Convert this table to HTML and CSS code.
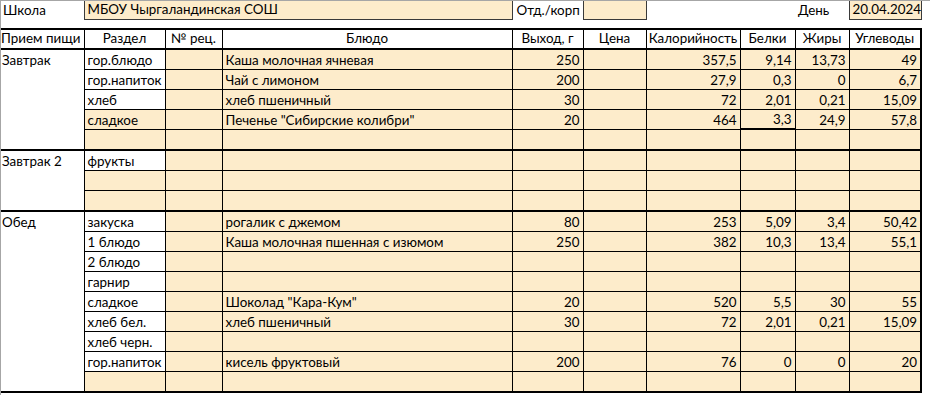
FILE: index.html
```html
<!DOCTYPE html>
<html lang="ru">
<head>
<meta charset="utf-8">
<title>Меню</title>
<link rel="stylesheet" href="styles.css">
</head>
<body>
<div class="sheet">
  <table class="info">
    <colgroup>
      <col class="ca"><col class="cb"><col class="cc"><col class="cd"><col class="ce"><col class="cf"><col class="cg"><col class="ch"><col class="ci"><col class="cj">
    </colgroup>
    <tr>
      <td>Школа</td>
      <td colspan="3" class="fld">МБОУ Чыргаландинская СОШ</td>
      <td class="side">Отд./корп</td>
      <td class="fld"></td>
      <td></td>
      <td></td>
      <td>День</td>
      <td class="fld num">20.04.2024</td>
    </tr>
  </table>

  <table class="menu">
    <colgroup>
      <col class="ca"><col class="cb"><col class="cc"><col class="cd"><col class="ce"><col class="cf"><col class="cg"><col class="ch"><col class="ci"><col class="cj">
    </colgroup>
    <thead>
      <tr class="head">
        <th class="first">Прием пищи</th>
        <th>Раздел</th>
        <th>№ рец.</th>
        <th>Блюдо</th>
        <th>Выход, г</th>
        <th>Цена</th>
        <th>Калорийность</th>
        <th>Белки</th>
        <th>Жиры</th>
        <th>Углеводы</th>
      </tr>
    </thead>
    <tbody>
      <tr>
        <td class="meal">Завтрак</td><td class="sec">гор.блюдо</td><td></td><td>Каша молочная ячневая</td><td class="num">250</td><td></td><td class="num">357,5</td><td class="num">9,14</td><td class="num">13,73</td><td class="num">49</td>
      </tr>
      <tr>
        <td class="meal"></td><td class="sec">гор.напиток</td><td></td><td>Чай с лимоном</td><td class="num">200</td><td></td><td class="num">27,9</td><td class="num">0,3</td><td class="num">0</td><td class="num">6,7</td>
      </tr>
      <tr>
        <td class="meal"></td><td class="sec">хлеб</td><td></td><td>хлеб пшеничный</td><td class="num">30</td><td></td><td class="num">72</td><td class="num">2,01</td><td class="num">0,21</td><td class="num">15,09</td>
      </tr>
      <tr>
        <td class="meal"></td><td>сладкое</td><td></td><td>Печенье "Сибирские колибри"</td><td class="num">20</td><td></td><td class="num">464</td><td class="num heavy">3,3</td><td class="num">24,9</td><td class="num">57,8</td>
      </tr>
      <tr class="end">
        <td class="meal"></td><td></td><td></td><td></td><td></td><td></td><td></td><td></td><td></td><td></td>
      </tr>

      <tr class="grp">
        <td class="meal">Завтрак 2</td><td class="sec">фрукты</td><td></td><td></td><td></td><td></td><td></td><td></td><td></td><td></td>
      </tr>
      <tr>
        <td class="meal"></td><td></td><td></td><td></td><td></td><td></td><td></td><td></td><td></td><td></td>
      </tr>
      <tr class="end">
        <td class="meal"></td><td></td><td></td><td></td><td></td><td></td><td></td><td></td><td></td><td></td>
      </tr>

      <tr class="grp">
        <td class="meal">Обед</td><td class="sec">закуска</td><td></td><td>рогалик с джемом</td><td class="num">80</td><td></td><td class="num">253</td><td class="num">5,09</td><td class="num">3,4</td><td class="num">50,42</td>
      </tr>
      <tr>
        <td class="meal"></td><td class="sec">1 блюдо</td><td></td><td>Каша молочная пшенная с изюмом</td><td class="num">250</td><td></td><td class="num">382</td><td class="num">10,3</td><td class="num">13,4</td><td class="num">55,1</td>
      </tr>
      <tr>
        <td class="meal"></td><td class="sec">2 блюдо</td><td></td><td></td><td></td><td></td><td></td><td></td><td></td><td></td>
      </tr>
      <tr>
        <td class="meal"></td><td class="sec">гарнир</td><td></td><td></td><td></td><td></td><td></td><td></td><td></td><td></td>
      </tr>
      <tr>
        <td class="meal"></td><td class="sec">сладкое</td><td></td><td>Шоколад "Кара-Кум"</td><td class="num">20</td><td></td><td class="num">520</td><td class="num">5,5</td><td class="num">30</td><td class="num">55</td>
      </tr>
      <tr>
        <td class="meal"></td><td class="sec">хлеб бел.</td><td></td><td>хлеб пшеничный</td><td class="num">30</td><td></td><td class="num">72</td><td class="num">2,01</td><td class="num">0,21</td><td class="num">15,09</td>
      </tr>
      <tr>
        <td class="meal"></td><td class="sec">хлеб черн.</td><td></td><td></td><td></td><td></td><td></td><td></td><td></td><td></td>
      </tr>
      <tr>
        <td class="meal"></td><td class="sec">гор.напиток</td><td></td><td>кисель фруктовый</td><td class="num">200</td><td></td><td class="num">76</td><td class="num">0</td><td class="num">0</td><td class="num">20</td>
      </tr>
      <tr class="last end">
        <td class="meal"></td><td></td><td></td><td></td><td></td><td></td><td></td><td></td><td></td><td></td>
      </tr>
    </tbody>
  </table>
</div>
</body>
</html>
```

FILE: styles.css
```css
* {
  box-sizing: border-box;
}

html,
body {
  margin: 0;
  padding: 0;
  background: #ffffff;
}

body {
  font-family: Lato, "Liberation Sans", sans-serif;
  font-size: 13.4px;
  color: #000000;
}

.sheet {
  width: 930px;
  height: 395px;
  border-top: 1px solid #a6a6a6;
  border-left: 1px solid #a6a6a6;
  overflow: hidden;
}

table {
  border-collapse: collapse;
  table-layout: fixed;
  width: 921px;
  margin-left: -1px;
}

.ca { width: 84px; }
.cb { width: 81px; }
.cc { width: 57px; }
.cd { width: 290px; }
.ce { width: 71px; }
.cf { width: 63px; }
.cg { width: 94px; }
.ch { width: 55px; }
.ci { width: 54px; }
.cj { width: 72px; }

td,
th {
  padding: 0 2px 1px 2px;
  vertical-align: bottom;
  white-space: nowrap;
  overflow: hidden;
  line-height: 16px;
  font-weight: normal;
}

/* top info line */
.info td {
  height: 18px;
  padding-left: 3px;
  padding-bottom: 2px;
}

.info .fld {
  background: #fdeccb;
  border-left: 1px solid #3a3a3a;
  border-right: 1px solid #3a3a3a;
  border-bottom: 1px solid #3a3a3a;
}

.info .side {
  padding-left: 4px;
}

.info .num {
  text-align: right;
  padding-right: 2px;
}

/* main table */
.menu {
  margin-top: 8px;
  border-right: 2px solid #000000;
  border-top: 2px solid #000000;
  border-bottom: 2px solid #000000;
}

.menu th {
  height: 20px;
  text-align: center;
  background: #ffffff;
  border: 1px solid #000000;
  border-bottom: 2px solid #000000;
  padding: 0 1px 2px 1px;
}

.menu th.first {
  text-align: left;
  border-left: none;
}

.menu td {
  height: 20px;
  background: #fdeccb;
  border: 1px solid #000000;
  padding-left: 3px;
  padding-right: 3px;
}

.menu tr.end td {
  height: 21px;
}

.menu td.meal {
  background: #ffffff;
  border-top: none;
  border-bottom: none;
  border-left: none;
  padding-left: 2px;
}

.menu td.sec {
  background: #ffffff;
}

.menu td.num {
  text-align: right;
}

.menu td.heavy {
  border-bottom: 2px solid #000000;
}

.menu tr.grp td {
  border-top: 2px solid #000000;
}

.menu tr.last td {
  border-bottom: 2px solid #000000;
}
```
